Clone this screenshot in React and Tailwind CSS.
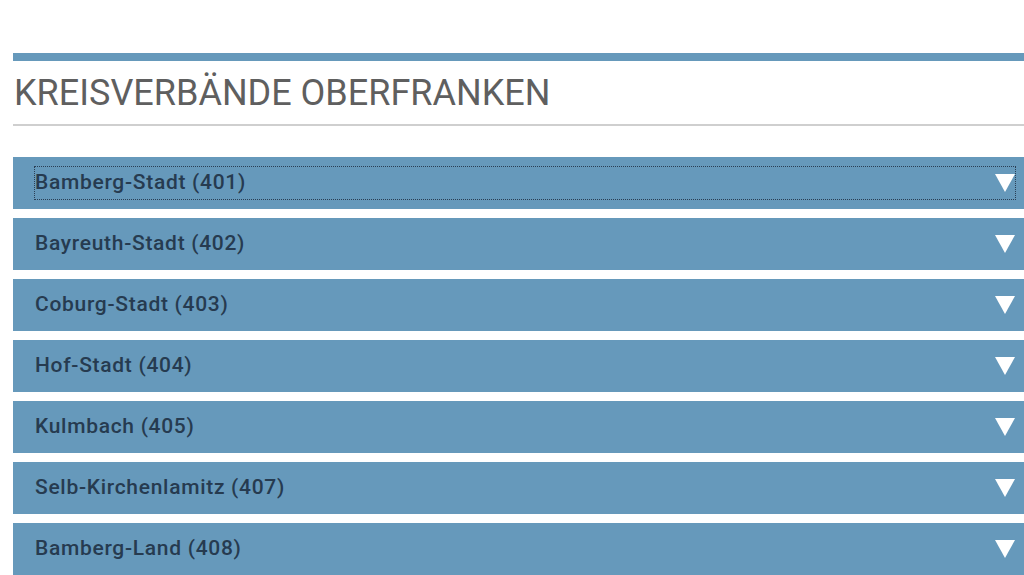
const ITEMS = [
  'Bamberg-Stadt (401)',
  'Bayreuth-Stadt (402)',
  'Coburg-Stadt (403)',
  'Hof-Stadt (404)',
  'Kulmbach (405)',
  'Selb-Kirchenlamitz (407)',
  'Bamberg-Land (408)',
];

const Arrow = () => (
  <svg width="20" height="18" viewBox="0 0 20 18" className="shrink-0">
    <polygon points="0,0 20,0 10,18" fill="#ffffff" />
  </svg>
);

export default function App() {
  return (
    <div className="w-[1024px] h-[575px] overflow-hidden bg-white pl-[13px] pt-[53px]" style={{ fontFamily: 'Roboto, "Liberation Sans", sans-serif' }}>
      <div className="h-[8px] bg-[#6699bb]" />
      <h1 className="h-[63px] flex items-center pl-[1px] text-[36px] text-[#5f5f5f] font-normal">
        KREISVERBÄNDE OBERFRANKEN
      </h1>
      <div className="h-[2px] bg-[#cfcfcf]" />
      <div className="flex flex-col gap-[9px] pt-[31px]">
        {ITEMS.map((item, i) => (
          <div key={item} className="h-[52px] bg-[#6699bb] flex items-center pl-[22px] pr-[9px]">
            <div className={`flex-1 flex items-center justify-between h-[32px] ${i === 0 ? 'outline-1 outline-dotted outline-[#2a3f55]' : ''}`}>
              <span className="text-[21px] tracking-[0.7px] font-medium text-[#263b50]">{item}</span>
              <Arrow />
            </div>
          </div>
        ))}
      </div>
    </div>
  );
}
